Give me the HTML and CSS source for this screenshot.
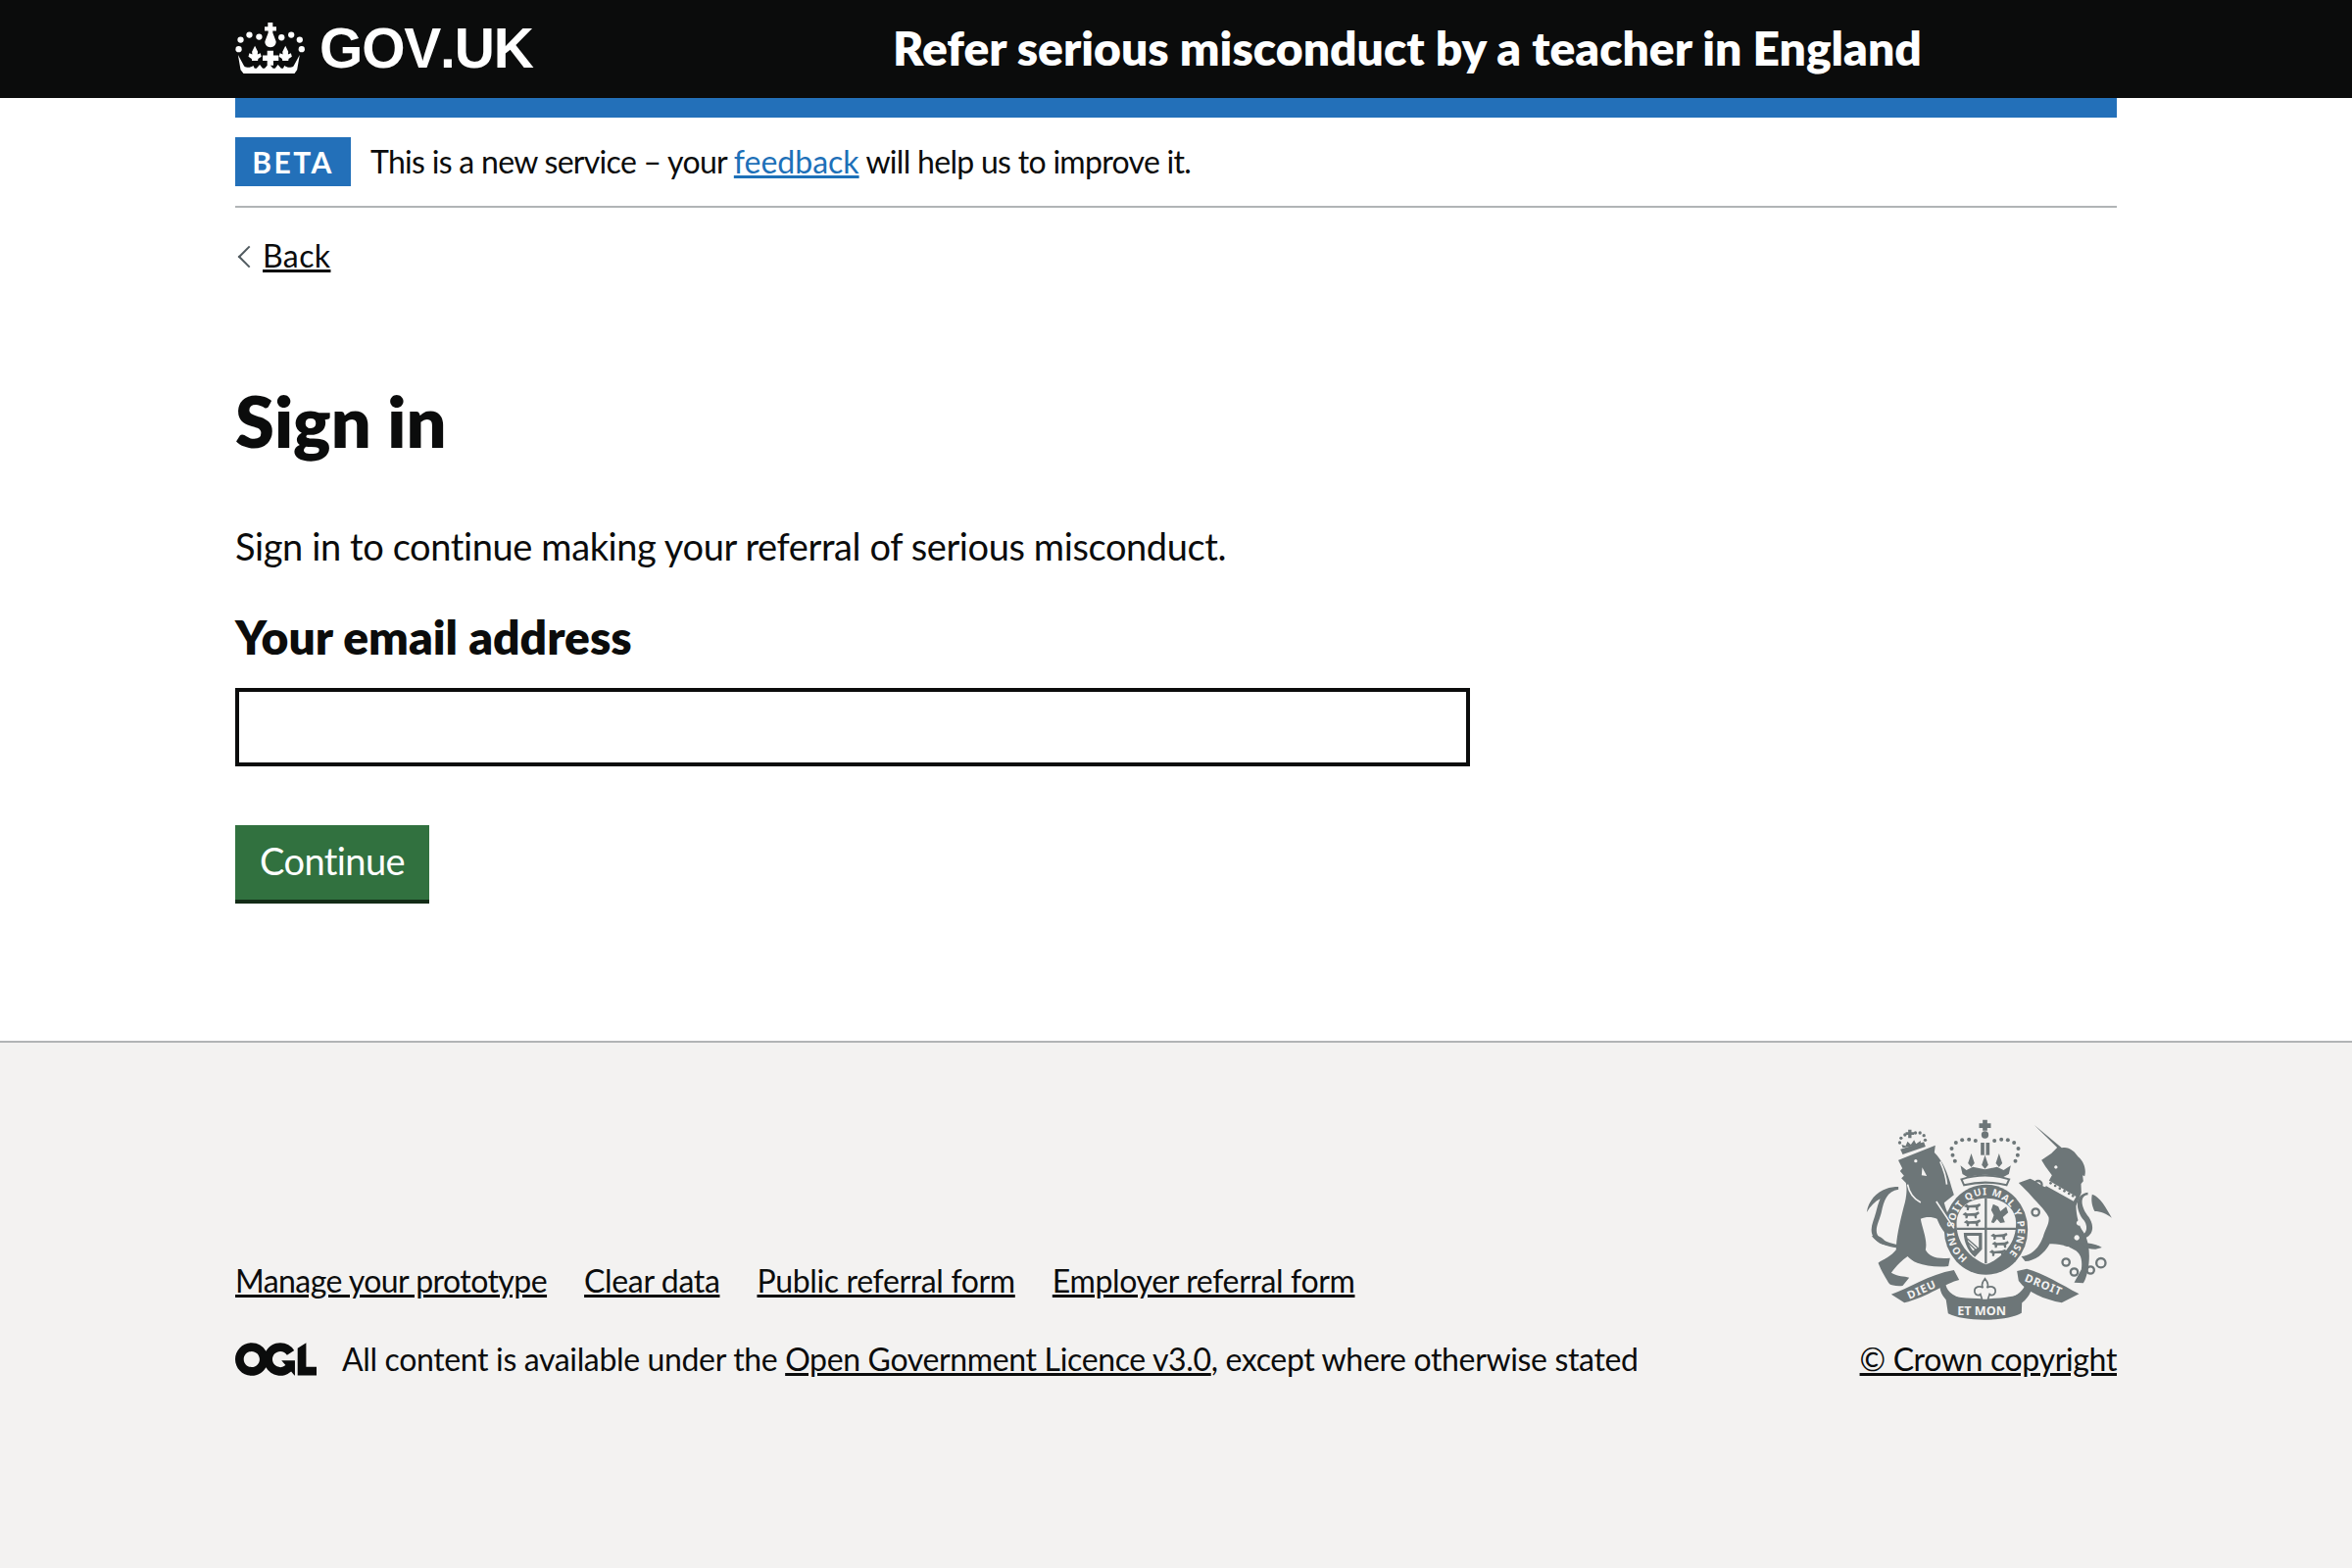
FILE: index.html
```html
<!DOCTYPE html>
<html lang="en">
<head>
<meta charset="utf-8">
<title>Sign in</title>
<link rel="stylesheet" href="styles.css">
</head>
<body>
<header class="site-header">
  <div class="width header-row">
    <a class="logo" href="#">
      <svg class="crown" viewBox="60 62 216 160" aria-hidden="true">
        <g fill="#fff">
          <path d="M160 65h15v13h11v13h-11v6l10 26c1 10-7 18-17 18s-18-8-17-18l10-26v-6h-11V78h10z"/>
          <circle cx="76" cy="118" r="9.5"/><circle cx="103" cy="103" r="9.5"/><circle cx="133" cy="109" r="9.5"/><circle cx="202" cy="111" r="9.5"/><circle cx="232" cy="103" r="9.5"/><circle cx="258" cy="118" r="9.5"/><circle cx="70" cy="147" r="9.5"/><circle cx="264" cy="147" r="9.5"/>
          <path d="M120 137l9 18-1 8 9-4 3 11-10 7-1 6h-18l-1-6-10-7 3-11 9 4-1-8z"/>
          <path d="M214 137l9 18-1 8 9-4 3 11-10 7-1 6h-18l-1-6-10-7 3-11 9 4-1-8z"/>
          <path d="M158 152h19v14h16v17h-16v14h-19v-14h-14v-17h14z"/>
          <path d="M68 165l19 34c8 6 19 6 28-1l4 8h6l10-11 9 11h6l13-14 13 14h6l9-11 10 11h6l4-8c9 7 20 7 28 1l19-34-8 46-8 11H85l-9-11z"/>
        </g>
      </svg>
      <span class="wordmark">GOV.UK</span>
    </a>
    <a class="service" href="#">Refer serious misconduct by a teacher in England</a>
  </div>
</header>
<div class="width">
  <div class="blue-bar"></div>
  <div class="phase">
    <strong class="tag">BETA</strong>
    <span>This is a new service – your <a class="blue" href="#">feedback</a> will help us to improve it.</span>
  </div>
  <a class="back" href="#">Back</a>
  <main class="main">
    <h1 class="title">Sign in</h1>
    <p class="body-text">Sign in to continue making your referral of serious misconduct.</p>
    <label class="label" for="email">Your email address</label>
    <input class="input" id="email" type="email">
    <button class="button" type="button">Continue</button>
  </main>
</div>
<footer class="footer">
  <div class="width footer-row">
    <div class="meta">
      <ul class="links">
        <li><a href="#">Manage your prototype</a></li>
        <li><a href="#">Clear data</a></li>
        <li><a href="#">Public referral form</a></li>
        <li><a href="#">Employer referral form</a></li>
      </ul>
      <div class="licence">
        <svg class="ogl" viewBox="0 0 483.2 195.7" aria-hidden="true"><path fill="currentColor" d="M421.5 142.8V.1l-50.7 32.3v161.1h112.4v-50.7zm-122.3-9.6A47.12 47.12 0 0 1 221 97.8c0-26 21.1-47.1 47.1-47.1 16.7 0 31.4 8.7 39.7 21.8l42.7-27.2A97.63 97.63 0 0 0 268.1 0c-36.5 0-68.3 20.1-85.1 49.7A98 98 0 0 0 97.8 0C43.9 0 0 43.9 0 97.8s43.9 97.8 97.8 97.8c36.5 0 68.3-20.1 85.1-49.7a97.76 97.76 0 0 0 149.6 25.4l19.4 22.2h3v-87.8h-80l24.3 27.5zM97.8 145c-26 0-47.1-21.1-47.1-47.1s21.1-47.1 47.1-47.1 47.2 21 47.2 47S123.8 145 97.8 145"/></svg>
        <span>All content is available under the <a href="#">Open Government Licence v3.0</a>, except where otherwise stated</span>
      </div>
    </div>
    <div class="crown-copy">
      <svg class="crest" viewBox="70 40 755 615" aria-hidden="true">
        <defs>
          <path id="passant" d="M0 9L9 2l6 4 24-2 10-4 3 6-8 6v9h-6l-2-8H17l-2 8H9v-8z"/>
        </defs>
        <g class="ink">
          <path d="M172 165L285 120l-3 22C305 165 322 200 335 250l7 22-30 24c6 24 18 49 34 89l-11 17c-20-7-35-32-45-57-15-7-35-7-50 0 5 30 22 65 15 95 10 20 35 30 75 25l-5 25c-35 5-70-2-95-10-15-5-25-15-30-20-15 10-35 30-50 50 20 12 40 10 55 15l-20 25c-20 2-35-2-40-5-10-15-25-40-35-65 15-10 40-20 55-40 0-40 15-100 27-145 6-25 6-45 3-60l-14-14 8-8-12-14 7-8-12-24z"/>
          <path d="M172 255c-35 5-45 35-52 70-7 30-25 55-8 75 12 14 35 18 58 25l-3 9c-30-5-55-12-68-28-20-25-4-50 4-80 4-16 8-30 13-42-15 8-30 22-41 41 5-35 30-62 60-72 10-4 25-6 37-6z"/>
          <path d="M90 398c15-5 30 0 45 20l-10 6c-15-5-25-15-35-26z"/>
          <path d="M178 132l72-22 5 14-70 24z"/>
          <path d="M185 128l-3-10 12 4 6-14 10 10 10-14 6 12 14-10v12z"/>
          <path d="M202 72h10v8h8v8h-8v10h-10V88h-8v-8h8z"/>
          <path d="M588 58l84 70c20-6 40 10 50 27 18 15 26 40 20 60l-6-3 2 18-7 8 1 27-16 40c-1 25 9 65 22 80 17 25 20 65 17 95-3 30-10 50-17 62l-28-2 22-40c4-30-2-50-22-60-20-12-50-20-75-18-15 28-45 53-75 53l-12-15c27-2 52-20 67-60 7-25 20-40 17-60-12-25-42-50-62-75l-30-30 35-13c20 8 35 23 47 26l20-36-20-27-12-20 30-20 18-18z"/>
          <path d="M752 272c-26 2-22 38 3 68 25 40 5 68-38 70l-2-10c30 0 42-25 25-50-25-30-32-80 12-86z"/>
          <path d="M765 270c25 8 42 40 60 72-15-12-35-20-52-20-8-15-12-35-8-52z"/>
          <path d="M730 418c25 0 50 5 65 15l-20 5c-20 0-35-5-45-20z"/>
          <path d="M430 42h14v11h11v14h-11v8h-14v-8h-11V53h11z"/>
          <circle cx="437" cy="88" r="11"/>
          <path d="M424 112h27v38h-27z"/>
          <path d="M362 182l18 14 20-10 37 8 37-8 20 10 22-14-6 26-18 10c-35-10-75-10-108 0l-16-10z"/>
          <path d="M395 145l10 30-10 12-10-12zM437 150l10 30-10 12-10-12zM480 145l10 30-10 12-10-12z"/>
          <ellipse cx="440" cy="378" rx="128" ry="138"/>
          <path d="M150 576c50-16 115-61 192-74l16 30c-38 8-98 53-168 70z"/>
          <path d="M318 530c-8 25 12 50 52 60l-30 20c-35-20-45-50-40-70zM560 525c8 22-10 48-45 62l25 22c32-18 45-50 40-70z"/>
          <path d="M315 575c50 20 185 20 236-2l-2 60c-50 28-175 28-225 2z"/>
          <path d="M535 505l30-7c50 14 105 47 160 77l-53 27c-52-10-107-32-132-67z"/>
        </g>
        <path class="band" d="M365 224c45-14 100-14 146 0l-8 18c-40-10-90-10-130 0z"/>
        <path class="paper" d="M350 360c0-50 40-78 90-78s92 28 92 78c0 60-42 105-92 125-50-20-90-65-90-125z"/>
        <g class="paper">
          <path d="M435 112h5v38h-5z"/>
          <circle cx="225" cy="168" r="5"/>
          <path d="M245 188l14 26-16-2zM690 430a8 8 0 1 0 .1 0M718 395a8 8 0 1 0 .1 0M725 350a8 8 0 1 0 .1 0M654 182a5 5 0 1 0 .1 0"/>
          <path d="M628 225l88 52-8 14-90-50z"/>
        </g>
        <g class="hairline-paper" fill="none">
          <path d="M288 292l54 82M300 170c10 22 18 45 20 70M200 240c5 25 20 45 40 55M605 200l22-5"/>
        </g>
        <g class="ink">
          <path d="M436 282h7v200h-7zM350 372h182v7H350z"/>
          <use href="#passant" x="372" y="298"/><use href="#passant" x="368" y="323"/><use href="#passant" x="372" y="347"/>
          <use href="#passant" x="454" y="388"/><use href="#passant" x="458" y="413"/><use href="#passant" x="450" y="438"/>
          <path d="M462 300l16 8 6 14 18-14 6 18-16 14 6 16-14 2-10-12-10 12-8-2 8-22-8-16zM372 388h56v50l-22 24c-20-15-34-46-34-74zm10 9c2 20 8 33 18 46l18-11v-35z"/>
          <path d="M382 405l34 30M382 415l30 28" class="hairline"/>
          <circle cx="638" cy="236" r="4"/><circle cx="652" cy="244" r="4"/><circle cx="666" cy="252" r="4"/><circle cx="680" cy="260" r="4"/><circle cx="694" cy="268" r="4"/><circle cx="706" cy="275" r="4"/>
        </g>
        <g class="rings" fill="none">
          <circle cx="685" cy="478" r="11"/><circle cx="710" cy="508" r="11"/><circle cx="760" cy="502" r="11"/><circle cx="792" cy="480" r="14"/>
          <circle cx="600" cy="240" r="11"/><circle cx="592" cy="325" r="11"/>
        </g>
        <g class="dots">
          <circle cx="338" cy="150" r="6"/><circle cx="335" cy="130" r="6"/><circle cx="348" cy="112" r="6"/><circle cx="367" cy="104" r="6"/><circle cx="388" cy="102" r="6"/><circle cx="408" cy="106" r="6"/><circle cx="466" cy="106" r="6"/><circle cx="487" cy="102" r="6"/><circle cx="507" cy="104" r="6"/><circle cx="526" cy="112" r="6"/><circle cx="539" cy="130" r="6"/><circle cx="537" cy="150" r="6"/><circle cx="345" cy="168" r="6"/><circle cx="530" cy="168" r="6"/>
          <circle cx="176" cy="112" r="5"/><circle cx="180" cy="98" r="5"/><circle cx="192" cy="88" r="5"/><circle cx="224" cy="82" r="5"/><circle cx="238" cy="82" r="5"/><circle cx="250" cy="90" r="5"/><circle cx="254" cy="104" r="5"/>
        </g>
        <path class="fleur" d="M437 528c10 12 12 20 6 28 10-6 26-4 26 10 0 12-12 16-18 10l-6 18h-16l-6-18c-6 6-18 2-18-10 0-14 16-16 26-10-6-8-4-16 6-28z"/>
        <path id="garter-arc" class="none" d="M384 465A98 106 0 1 1 496 465"/>
        <text class="crest-text garter"><textPath href="#garter-arc" textLength="500">HONI SOIT QUI MAL Y PENSE</textPath></text>
        <text class="crest-text ribbon" transform="rotate(-24 205 592)" x="205" y="592">DIEU</text>
        <text class="crest-text" x="352" y="640">ET MON</text>
        <text class="crest-text ribbon" transform="rotate(22 556 535)" x="556" y="535">DROIT</text>
      </svg>
      <a href="#">© Crown copyright</a>
    </div>
  </div>
</footer>
</body>
</html>
```
FILE: styles.css
```css
* { box-sizing: border-box; }
html, body { margin: 0; padding: 0; }
body {
  min-height: 1600px;
  display: flex;
  flex-direction: column;
  font-family: Lato, "Noto Sans", sans-serif;
  font-variant-ligatures: none;
  color: #0b0c0c;
  background: #fff;
}
a { color: inherit; }
.width { width: 1920px; margin: 0 auto; }

.site-header { background: #0b0c0c; height: 100px; }
.header-row { display: flex; align-items: center; height: 100px; padding-bottom: 3px; }
.logo { display: flex; align-items: center; gap: 14px; width: 671px; color: #fff; text-decoration: none; }
.crown { width: 72px; height: 53px; display: block; }
.wordmark { margin-top: 2px; font: bold 57px/1 "Liberation Sans", sans-serif; font-kerning: none; letter-spacing: -1.2px; }
.service { color: #fff; font-weight: 800; font-size: 48px; line-height: 1; text-decoration: none; }

.blue-bar { height: 20px; background: #2370b9; }
.phase {
  display: flex;
  align-items: center;
  gap: 20px;
  padding: 20px 0;
  border-bottom: 2px solid #b1b4b6;
  font-size: 32px;
  letter-spacing: -0.7px;
  line-height: 50px;
  height: 92px;
}
.tag {
  width: 118px;
  height: 50px;
  background: #2370b9;
  color: #fff;
  font-size: 30px;
  letter-spacing: 2.5px;
  text-align: center;
}
.blue { color: #1d70b8; letter-spacing: 0; }

.back {
  display: inline-block;
  position: relative;
  margin: 30px 0 2px;
  padding-left: 28px;
  font-size: 32px;
  letter-spacing: 0.4px;
  line-height: 38px;
}
.back::before {
  content: "";
  position: absolute;
  left: 6px;
  top: 12px;
  width: 14px;
  height: 14px;
  border-left: 2px solid #505a5f;
  border-bottom: 2px solid #505a5f;
  transform: rotate(45deg);
}

.main { display: flex; flex-direction: column; align-items: flex-start; padding: 102px 0 140px; }
.title { margin: 0 0 58px; font-size: 72px; line-height: 90px; font-weight: 800; }
.body-text { margin: 0 0 43px; font-size: 38px; letter-spacing: -0.4px; line-height: 50px; }
.label { margin-bottom: 27px; font-size: 48px; font-weight: 800; line-height: 50px; }
.input { width: 1260px; height: 80px; border: 4px solid #0b0c0c; background: #fff; border-radius: 0; margin-bottom: 60px; }
.button {
  height: 80px;
  width: 198px;
  padding: 0 0 4px;
  border: 0;
  border-bottom: 4px solid #132c17;
  background: #31713f;
  color: #fff;
  font: 38px/1 Lato, sans-serif;
  letter-spacing: -0.6px;
}

.footer { flex: 1; background: #f3f2f1; border-top: 2px solid #b1b4b6; }
.footer-row { display: flex; justify-content: space-between; align-items: flex-end; padding-top: 78px; letter-spacing: -0.35px; }
.links { display: flex; gap: 38px; list-style: none; margin: 0 0 40px; padding: 0; font-size: 32px; line-height: 40px; }
.links li:first-child { letter-spacing: -0.55px; }
.licence { display: flex; align-items: center; gap: 26px; font-size: 32px; line-height: 40px; }
.ogl { width: 83px; height: 34px; display: block; }
.crown-copy { display: flex; flex-direction: column; align-items: flex-end; gap: 20px; font-size: 32px; line-height: 40px; }
.crest { width: 252px; height: 205px; display: block; margin-right: 5px; }
.ink { fill: #6d7678; }
.paper { fill: #f3f2f1; }
.band { fill: #f3f2f1; stroke: #6d7678; stroke-width: 6; }
.hairline { fill: none; stroke: #6d7678; stroke-width: 4; }
.hairline-paper { stroke: #f3f2f1; stroke-width: 5; }
.rings { stroke: #6d7678; stroke-width: 7; }
.dots { fill: #6d7678; }
.fleur { fill: #f3f2f1; stroke: #6d7678; stroke-width: 5; }
.none { fill: none; }
.crest-text { fill: #f3f2f1; font: 700 38px "Noto Sans", sans-serif; letter-spacing: 0; }
.ribbon { font-size: 34px; letter-spacing: 3px; }
.garter { font-size: 30px; }
```
